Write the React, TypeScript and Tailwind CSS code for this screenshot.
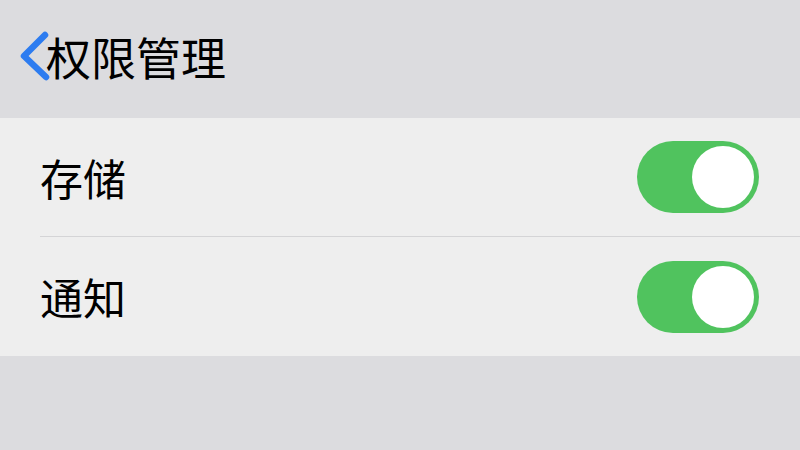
const Toggle = () => (
  <div className="w-[122px] h-[72px] rounded-full bg-[#50c35e] p-[5px] flex justify-end">
    <div className="w-[62px] h-[62px] rounded-full bg-white" />
  </div>
);

const Row = ({ label, last }: { label: string; last?: boolean }) => (
  <div className="pl-[40px]">
    <div className={`h-[119px] flex items-center justify-between pr-[41px] ${last ? "" : "border-b border-[#d4d4d6]"}`}>
      <span className="text-[43px] text-black leading-none">{label}</span>
      <Toggle />
    </div>
  </div>
);

export default function App() {
  return (
    <div
      className="w-[800px] h-[450px] bg-[#dcdcdf] flex flex-col"
      style={{ fontFamily: '"Noto Sans CJK SC", "Noto Sans", sans-serif' }}
    >
      <div className="h-[118px] flex items-center pl-[18px] pb-[6px]">
        <svg width="32" height="52" viewBox="0 0 32 52" className="mr-[-4px]">
          <path d="M27 5 L6 26 L28 47" fill="none" stroke="#2d7cf0" strokeWidth="6.5" strokeLinecap="round" strokeLinejoin="round" />
        </svg>
        <span className="text-[45px] text-black leading-none">权限管理</span>
      </div>
      <div className="bg-[#eeeeee]">
        <Row label="存储" />
        <Row label="通知" last />
      </div>
    </div>
  );
}
